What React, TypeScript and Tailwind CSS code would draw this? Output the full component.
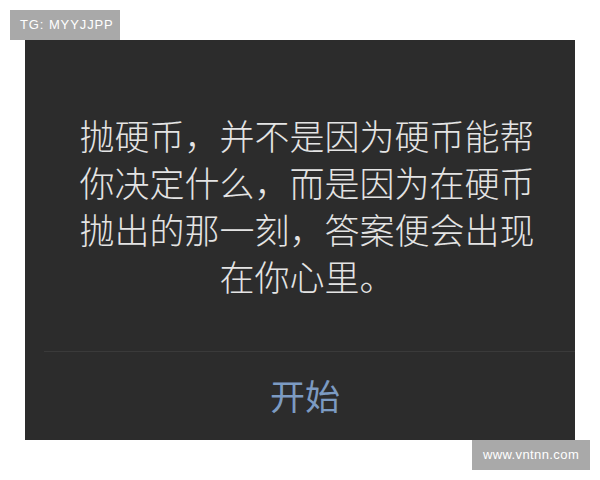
import React from 'react'

const lines = ['抛硬币，并不是因为硬币能帮', '你决定什么，而是因为在硬币', '抛出的那一刻，答案便会出现', '在你心里。']

export default function App() {
	return (
		<div className="w-[600px] h-[480px] bg-white font-['Liberation_Sans','Noto_Sans_CJK_SC',sans-serif]">
			<div className="pt-[10px] pl-[10px]">
				<div className="w-[110px] h-[30px] bg-[#a9a9a9] text-white text-[13px] flex items-center pl-[10px] tracking-[0.9px]">
					TG: MYYJJPP
				</div>
			</div>
			<div className="ml-[25px] w-[550px] h-[400px] bg-[#2c2c2c] flex flex-col">
				<div className="pt-[71px] pl-[54px] pr-[40px] h-[311px] text-[35px] leading-[47px] text-[#e4e4e4] text-center font-light font-['Noto_Sans_CJK_SC',sans-serif]">
					{lines.map((line) => (
						<div key={line}>{line}</div>
					))}
				</div>
				<div className="ml-[19px] h-px bg-[#3a3a3a]" />
				<div className="flex-1 flex items-center justify-center pl-[10px] pb-[2px] text-[35px] text-[#7c9bc2] font-['Noto_Sans_CJK_SC',sans-serif]">
					开始
				</div>
			</div>
			<div className="ml-[472px] w-[118px] h-[30px] bg-[#a9a9a9] text-white text-[13px] flex items-center justify-center tracking-[0.4px]">
				www.vntnn.com
			</div>
		</div>
	)
}
